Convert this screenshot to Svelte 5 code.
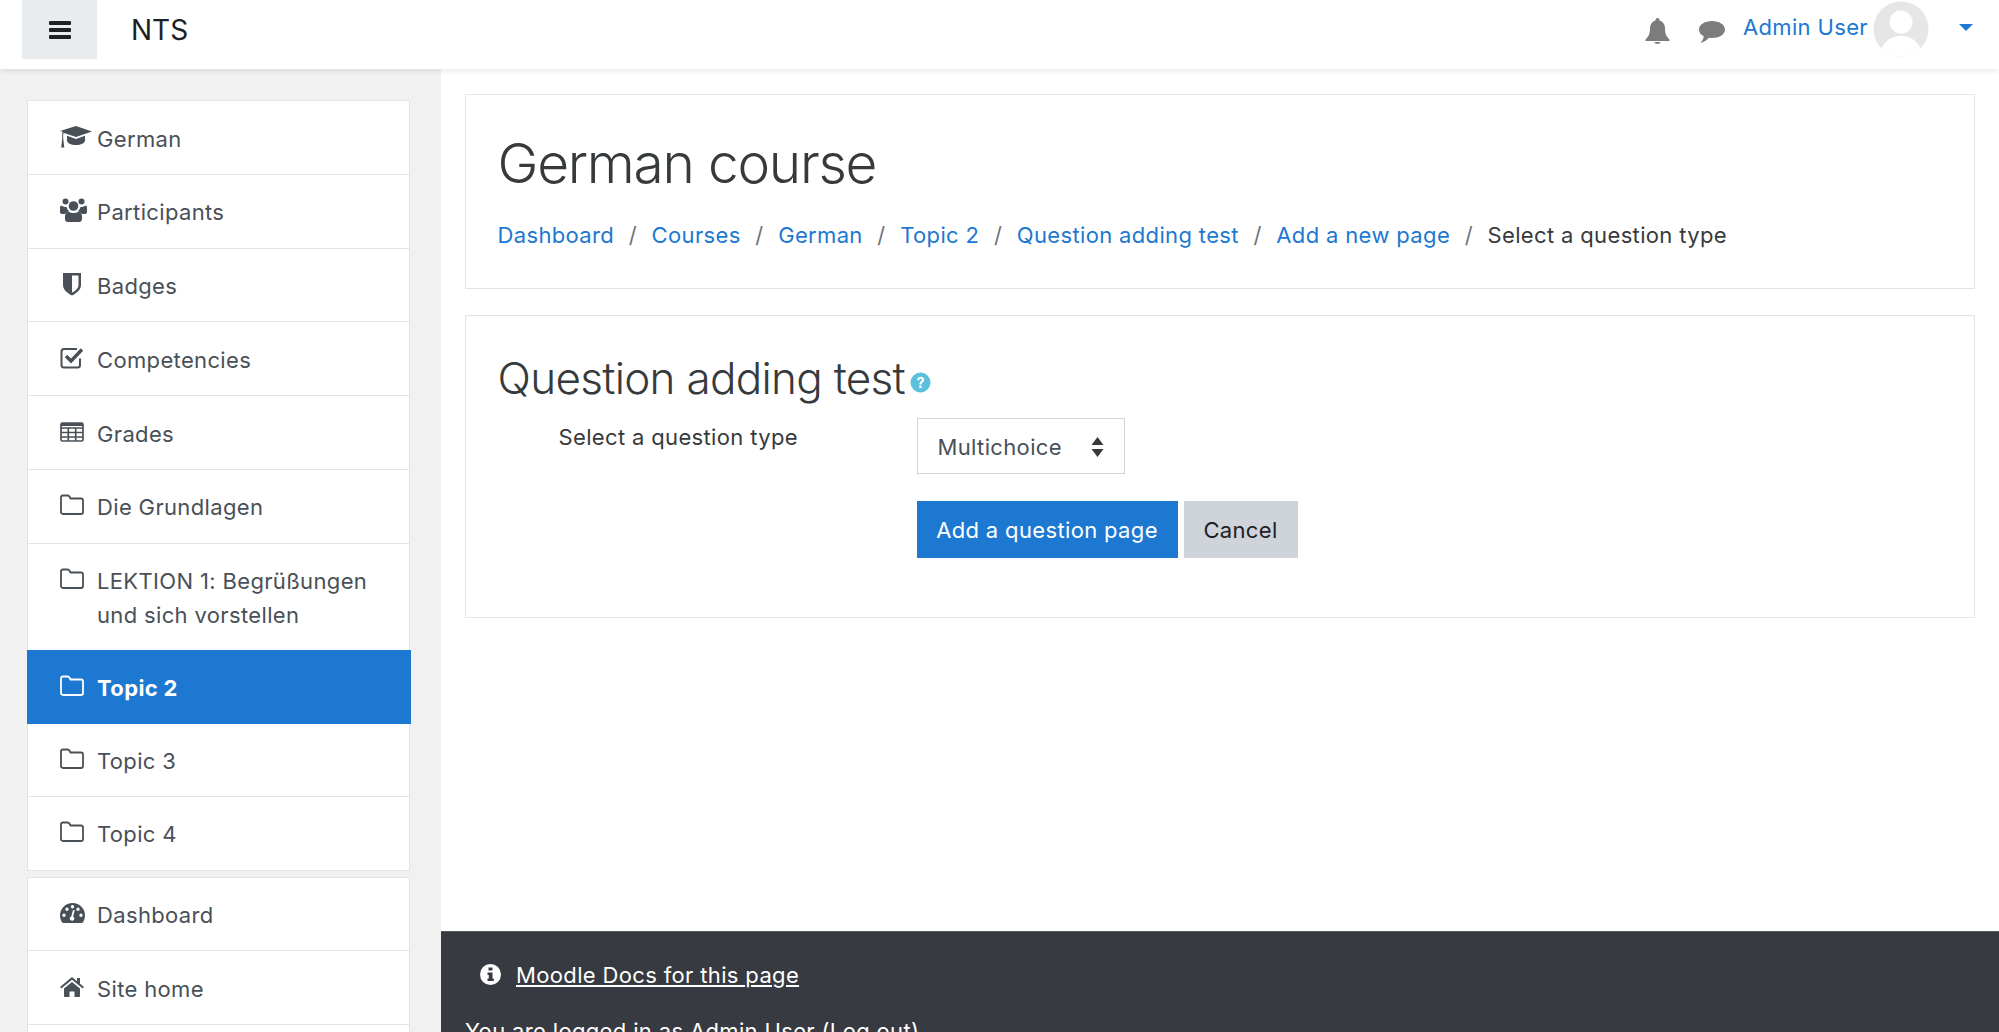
<script>
  const mainNav = [
    { label: "German", icon: "cap" },
    { label: "Participants", icon: "users" },
    { label: "Badges", icon: "shield" },
    { label: "Competencies", icon: "check" },
    { label: "Grades", icon: "table" },
    { label: "Die Grundlagen", icon: "folder" },
    { label: "LEKTION 1: Begrüßungen und sich vorstellen", icon: "folder" },
    { label: "Topic 2", icon: "folder", active: true },
    { label: "Topic 3", icon: "folder" },
    { label: "Topic 4", icon: "folder" }
  ];
  const siteNav = [
    { label: "Dashboard", icon: "gauge" },
    { label: "Site home", icon: "home" },
    { label: "", icon: "" }
  ];
  const crumbs = ["Dashboard", "Courses", "German", "Topic 2", "Question adding test", "Add a new page"];
</script>

{#snippet navIcon(name)}
  {#if name === "cap"}
    <svg class="icon" viewBox="0 0 37 28" fill="currentColor"><path d="M16 1 32 6.500 16 12 4 7.900 3.200 8.400V13.500L4.300 22.500H1.200L2.200 13.500V8C2.200 7.300 2.600 7 3 6.700L0 6Z"/><path d="M7 10.800 16 14 25 10.800V15.500C25 18 21 20 16 20S7 18 7 15.500Z"/></svg>
  {:else if name === "users"}
    <svg class="icon" viewBox="0 0 37 28" fill="currentColor"><circle cx="5.500" cy="3.500" r="3"/><circle cx="21.500" cy="3.500" r="3"/><circle cx="13.500" cy="8" r="4.800"/><path d="M0 9.500C0 8 1 7.500 2 7.800 3.500 9 5 9 6.500 9 7 11 8 12.300 9 13 7 13.500 5.500 15 5 16H2C.8 16 0 15.300 0 14ZM27 9.500C27 8 26 7.500 25 7.800 23.500 9 22 9 20.500 9 20 11 19 12.300 18 13 20 13.500 21.500 15 22 16H25C26.200 16 27 15.300 27 14ZM8.500 13.500C10 14.500 11.800 15 13.500 15S17 14.500 18.500 13.500C20.500 13.500 22 15.500 22 18.500V21C22 23 20.800 24 19 24H8C6.200 24 5 23 5 21V18.500C5 15.500 6.500 13.500 8.500 13.500Z"/></svg>
  {:else if name === "shield"}
    <svg class="icon" viewBox="0 0 37 28" fill="currentColor"><path fill-rule="evenodd" d="M3 1H21V13C21 18 16 21.500 12 23.500 8 21.500 3 18 3 13ZM12 3.500V20.500C15 19 18.500 16.500 18.500 13V3.500Z"/></svg>
  {:else if name === "check"}
    <svg class="icon" viewBox="0 0 37 28" fill="none" stroke="currentColor"><path stroke-width="2" d="M20 12.500V19C20 20.700 19 21.500 17.500 21.500H4C2.400 21.500 1.500 20.700 1.500 19V5.500C1.500 4 2.400 3 4 3H17"/><path stroke-width="3.400" d="M6 10 11 15 22 3.500"/></svg>
  {:else if name === "table"}
    <svg class="icon" viewBox="0 0 37 28" fill="none" stroke="currentColor" stroke-width="1.700"><rect x="1" y="3" width="22" height="18" rx="1.500"/><path d="M1 8H23M1 12.500H23M1 17H23M8.300 8V21M15.700 8V21"/><path stroke-width="3" d="M1 4.500H23"/></svg>
  {:else if name === "folder"}
    <svg class="icon" viewBox="0 0 37 28" fill="none" stroke="currentColor" stroke-width="1.800"><path d="M1 19V4.500C1 3.300 1.800 2.500 3 2.500H7.500C8.700 2.500 9.200 3 9.700 4L10.500 5.500H21C22.200 5.500 23 6.300 23 7.500V19C23 20.200 22.200 21 21 21H3C1.800 21 1 20.200 1 19Z"/></svg>
  {:else if name === "gauge"}
    <svg class="icon" viewBox="0 0 37 28" fill="currentColor"><path fill-rule="evenodd" d="M12.500 2C19.500 2 25 7.500 25 14.500 25 17 24.300 19.300 23 21.300 22.700 21.700 22.300 22 21.800 22H3.200C2.700 22 2.300 21.700 2 21.300.7 19.300 0 17 0 14.500 0 7.500 5.500 2 12.500 2ZM4 12.500A1.700 1.700 0 1 0 4 15.900 1.700 1.700 0 0 0 4 12.500ZM7 6.500A1.700 1.700 0 1 0 7 9.900 1.700 1.700 0 0 0 7 6.500ZM12.500 4A1.700 1.700 0 1 0 12.500 7.400 1.700 1.700 0 0 0 12.500 4ZM18 6.500A1.700 1.700 0 1 0 18 9.900 1.700 1.700 0 0 0 18 6.500ZM21 12.500A1.700 1.700 0 1 0 21 15.900 1.700 1.700 0 0 0 21 12.500ZM13 9 11.200 15.500C10 15.900 9.500 17 9.800 18.100 10.200 19.400 11.500 20 12.700 19.700 13.900 19.300 14.600 18.100 14.200 16.900 14 16.200 13.600 15.800 13.100 15.500L14.800 9.300Z"/></svg>
  {:else if name === "home"}
    <svg class="icon" viewBox="0 0 37 28" fill="currentColor"><path d="M12 7 20 13.500V21C20 21.500 19.600 22 19 22H14.500V16.500H9.500V22H5C4.400 22 4 21.500 4 21V13.500Z"/><path d="M12 2 17 6.200V3H20V8.700L24 12 22.800 13.500 12 4.700 1.200 13.500 0 12Z"/></svg>
  {/if}
{/snippet}

<div class="page">
  <header class="navbar">
    <button class="toggle" aria-label="Toggle navigation">
      <svg width="22" height="18" viewBox="0 0 22 18" fill="#1d2125"><rect width="22" height="4" y="0" rx="1"/><rect width="22" height="4" y="7" rx="1"/><rect width="22" height="4" y="14" rx="1"/></svg>
    </button>
    <span class="brand">NTS</span>
    <div class="user-area">
      <svg class="bell" width="25" height="26" viewBox="0 0 25 26" fill="#7c7c7c"><path d="M12.500 0C14 0 14.500 1 14.500 2.500 18 3.500 20 6.500 20 10.500 20 16 21.500 18.500 24.500 21.500V23H.5V21.500C3.500 18.500 5 16 5 10.500 5 6.500 7 3.500 10.500 2.500 10.500 1 11 0 12.500 0ZM9.500 24H15.500C15.500 25.200 14 26 12.500 26S9.500 25.200 9.500 24Z"/></svg>
      <svg class="comment" width="26" height="22" viewBox="0 0 26 22" fill="#7c7c7c"><path d="M13 0C20 0 26 3.500 26 8.500S20 17 13 17C12 17 11 17 10 16.800 8 19 5.500 21 1.500 22 3.500 19.500 4.500 17.500 4.800 15.300 1.800 13.800 0 11.300 0 8.500 0 3.500 6 0 13 0Z"/></svg>
      <span class="username">Admin User</span>
      <svg class="avatar" width="56" height="56" viewBox="0 0 56 56"><defs><clipPath id="av"><circle cx="28" cy="28" r="27.500"/></clipPath></defs><circle cx="28" cy="28" r="27.500" fill="#e6e6e6"/><g clip-path="url(#av)" fill="#fff"><circle cx="28" cy="21" r="11.500"/><ellipse cx="28" cy="52" rx="20" ry="17"/></g></svg>
      <span class="caret"></span>
    </div>
  </header>

  <div class="body">
    <aside class="sidebar">
      <ul class="nav-card">
        {#each mainNav as item}
          <li class="nav-item" class:active={item.active}>
            {@render navIcon(item.icon)}
            <span>{item.label}</span>
          </li>
        {/each}
      </ul>
      <ul class="nav-card">
        {#each siteNav as item}
          <li class="nav-item">
            {@render navIcon(item.icon)}
            <span>{item.label}</span>
          </li>
        {/each}
      </ul>
    </aside>

    <div class="main-col">
      <main class="content">
        <section class="card header-card">
          <h1>German course</h1>
          <nav class="breadcrumb">
            {#each crumbs as c}
              <a href="#top">{c}</a><span class="sep">/</span>
            {/each}
            <span class="current">Select a question type</span>
          </nav>
        </section>

        <section class="card form-card">
          <h2>Question adding test<svg class="help" width="21" height="21" viewBox="0 0 21 21"><circle cx="10.500" cy="10.500" r="10" fill="#5bc0de"/><path d="M7 8C7.300 5.800 8.800 4.700 10.700 4.700 12.800 4.700 14.200 6 14.200 7.700 14.200 10.300 11.500 10.300 11.500 12.500H9.300C9.300 9.500 11.800 9.300 11.800 7.900 11.800 7.200 11.300 6.800 10.600 6.800 9.900 6.800 9.400 7.300 9.200 8.400ZM9.300 13.500H11.600V16H9.300Z" fill="#fff"/></svg></h2>
          <div class="form-row">
            <label class="form-label" for="qtype">Select a question type</label>
            <div class="select" id="qtype">
              <span>Multichoice</span>
              <svg width="13" height="22" viewBox="0 0 13 22" fill="#373a3c"><path d="M6.500 1 12.500 9H.5ZM6.500 21 .5 13H12.500Z"/></svg>
            </div>
          </div>
          <div class="actions">
            <button class="btn primary">Add a question page</button>
            <button class="btn secondary">Cancel</button>
          </div>
        </section>
      </main>

      <footer class="footer">
        <p class="docs">
          <svg width="21" height="21" viewBox="0 0 21 21"><circle cx="10.500" cy="10.500" r="10.500" fill="#fff"/><path d="M8.500 3.500H12.500V6.500H8.500ZM7.500 8.500H12.500V14.500H13.800V17H7.500V14.500H8.800V11H7.500Z" fill="#373a40"/></svg>
          <a href="#top">Moodle Docs for this page</a>
        </p>
        <p class="login">You are logged in as Admin User (Log out)</p>
      </footer>
    </div>
  </div>
</div>

<style>
  :global(body) {
    margin: 0;
    background: #fff;
  }

  .page {
    height: 1032px;
    overflow: hidden;
    font-family: Inter, "Liberation Sans", sans-serif;
    font-size: 22px;
    letter-spacing: 0.35px;
    color: #373a3c;
    display: flex;
    flex-direction: column;
  }

  /* Top bar */
  .navbar {
    height: 69px;
    flex: none;
    display: flex;
    align-items: flex-start;
    padding-left: 22px;
    box-sizing: border-box;
    box-shadow: 0 2px 6px rgba(0, 0, 0, 0.09);
    position: relative;
    z-index: 2;
    background: #fff;
  }

  .toggle {
    width: 75px;
    height: 59px;
    border: 0;
    background: #e9ecef;
    display: flex;
    align-items: center;
    justify-content: center;
    padding: 0;
  }

  .brand {
    margin-left: 34px;
    font-size: 28px;
    letter-spacing: 0;
    line-height: 60px;
    color: #1d2125;
  }

  .user-area {
    margin-left: auto;
    display: flex;
    align-items: center;
    height: 56px;
    margin-top: 1px;
    padding-right: 26px;
  }

  .bell {
    margin-top: 4px;
  }

  .comment {
    margin: 6px 0 0 29px;
  }

  .username {
    margin-left: 18px;
    margin-right: 5px;
    color: #1c78d0;
    margin-top: -5px;
  }

  .caret {
    margin-left: 30px;
    margin-top: -3px;
    border-left: 7px solid transparent;
    border-right: 7px solid transparent;
    border-top: 7px solid #1c78d0;
  }

  /* Layout */
  .body {
    flex: 1;
    display: flex;
    min-height: 0;
  }

  .sidebar {
    width: 441px;
    flex: none;
    background: #f1f1f1;
    padding: 31px 31px 0 27px;
    box-sizing: border-box;
    display: flex;
    flex-direction: column;
    gap: 6px;
  }

  .nav-card {
    list-style: none;
    margin: 0;
    padding: 0;
    background: #fff;
    border: 1.500px solid #e3e4e6;
    border-bottom: 0;
    flex: none;
  }

  .nav-item {
    display: flex;
    align-items: flex-start;
    padding: 20.500px 20px 18.250px 31px;
    line-height: 34px;
    min-height: 34px;
    color: #495057;
    border-bottom: 1.500px solid #e3e4e6;
    margin: 0;
  }

  .nav-item.active {
    background: #1c78d0;
    color: #fff;
    font-weight: 700;
    margin: -1px -1.500px;
    padding-left: 32.500px;
    padding-right: 21.500px;
    border-bottom-color: #1c78d0;
    position: relative;
  }

  .icon {
    width: 37px;
    height: 28px;
    flex: none;
    margin: 3px 0 0 1px;
  }

  /* Main column */
  .main-col {
    flex: 1;
    min-width: 0;
    display: flex;
    flex-direction: column;
  }

  .content {
    height: 862px;
    flex: none;
    box-sizing: border-box;
    padding: 25px 24px 0;
    display: flex;
    flex-direction: column;
    gap: 26px;
  }

  .card {
    border: 1.500px solid #e3e4e6;
    box-sizing: border-box;
    padding: 0 31.500px;
    background: #fff;
  }

  .header-card {
    height: 195px;
    padding-top: 34px;
  }

  h1 {
    margin: 0;
    font-size: 55px;
    letter-spacing: -1.250px;
    font-weight: 300;
    line-height: 68px;
    color: #373a3c;
  }

  .breadcrumb {
    margin-top: 23px;
    line-height: 31px;
    display: flex;
    white-space: nowrap;
  }

  .breadcrumb a {
    color: #1c78d0;
    text-decoration: none;
  }

  .sep {
    color: #6c757d;
    padding: 0 14.600px;
  }

  .form-card {
    height: 303px;
    padding-top: 34px;
  }

  h2 {
    margin: 0;
    font-size: 44px;
    letter-spacing: -0.700px;
    font-weight: 300;
    line-height: 56px;
    display: flex;
    align-items: flex-end;
  }

  .help {
    margin: 0 0 13px 5px;
  }

  .form-row {
    display: flex;
    align-items: flex-start;
    margin-top: 12px;
  }

  .form-label {
    width: 419px;
    box-sizing: border-box;
    flex: none;
    padding: 2px 0 0 61px;
    line-height: 34px;
    color: #373a3c;
  }

  .select {
    width: 208px;
    height: 56px;
    box-sizing: border-box;
    border: 1.500px solid #ced4da;
    display: flex;
    align-items: center;
    justify-content: space-between;
    padding: 2px 20px 0;
    color: #495057;
  }

  .actions {
    display: flex;
    gap: 6px;
    margin: 27px 0 0 419px;
  }

  .btn {
    height: 57px;
    border: 0;
    padding: 0;
    font: inherit;
    letter-spacing: inherit;
  }

  .primary {
    width: 261px;
    background: #1c78d0;
    color: #fff;
  }

  .secondary {
    width: 114px;
    background: #ced4da;
    color: #1d2125;
  }

  /* Footer */
  .footer {
    flex: 1;
    background: #373a40;
    color: #fff;
    border-top: 1px solid #55585d;
    padding: 0 24px;
  }

  .footer p {
    margin: 0;
  }

  .docs {
    display: flex;
    align-items: center;
    height: 41px;
    margin-top: 22px !important;
    padding-left: 15px;
    gap: 15px;
  }

  .docs a {
    color: #fff;
    text-decoration: underline;
  }

  .login {
    margin-top: 21px !important;
    line-height: 31px;
  }
</style>
